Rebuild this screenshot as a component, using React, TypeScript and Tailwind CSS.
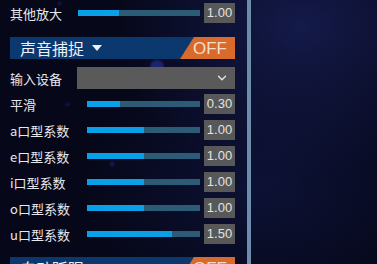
import { ChevronDown } from "lucide-react";

const font = { fontFamily: '"Noto Sans CJK SC", "Noto Sans", sans-serif' };

type SliderRowProps = {
  label: string;
  value: number;
  max?: number;
  labelWidth?: string;
};

const SliderRow = ({ label, value, max = 2, labelWidth = "w-[77px]" }: SliderRowProps) => {
  const pct = Math.min(100, (value / max) * 100);
  return (
    <div className="flex h-[26px] shrink-0 items-center">
      <div className={`${labelWidth} shrink-0 text-[13px] leading-none text-[#e8e8ec]`}>{label}</div>
      <div className="relative h-[6px] flex-1 bg-[#2b5b75]">
        <div className="absolute inset-y-0 left-0 bg-[#09a0e8]" style={{ width: `${pct}%` }} />
      </div>
      <div
        className="ml-[4px] flex h-[20px] w-[31px] items-center justify-center bg-[#585858] text-[13px] text-[#e2e2e2]"
        style={{ fontFamily: '"Liberation Sans", Arial, sans-serif' }}
      >
        {value.toFixed(2)}
      </div>
    </div>
  );
};

const SectionHeader = ({ title }: { title: string }) => (
  <div className="relative flex h-[22px] items-center bg-[#0c3870] pl-[10px]">
    <span className="text-[16px] leading-none text-[#eef0f5]">{title}</span>
    <svg className="ml-[8px]" width="10" height="7" viewBox="0 0 10 7">
      <path d="M0 0 H10 L5 6 Z" fill="#eef0f5" />
    </svg>
    <div className="absolute inset-y-0 right-0 flex w-[55px] items-center justify-end bg-[#d86a2c] pr-[8px] [clip-path:polygon(14px_0,100%_0,100%_100%,0_100%)]">
      <span
        className="text-[17px] leading-none text-[#f6dcc8]"
        style={{ fontFamily: '"Liberation Sans", Arial, sans-serif' }}
      >
        OFF
      </span>
    </div>
  </div>
);

const stars = [
  { x: 58, y: 2, s: 3 },
  { x: 110, y: 101, s: 4 },
  { x: 66, y: 103, s: 3 },
  { x: 110, y: 162, s: 4 },
  { x: 150, y: 60, s: 14 },
  { x: 145, y: 80, s: 6 },
];

export default function App() {
  return (
    <div className="relative flex h-[264px] w-[377px] overflow-hidden bg-[#060718]" style={font}>
      <div className="pointer-events-none absolute inset-0 bg-[radial-gradient(ellipse_at_80%_10%,#141a4a_0%,transparent_45%),radial-gradient(ellipse_at_70%_70%,#0d1236_0%,transparent_50%)]" />
      {stars.map((st, i) => (
        <div
          key={i}
          className="pointer-events-none absolute rounded-full bg-[#2a35a0] opacity-60 blur-[1px]"
          style={{ left: st.x, top: st.y, width: st.s, height: st.s }}
        />
      ))}

      <div className="relative flex w-[247px] shrink-0 flex-col self-start pl-[10px] pr-[12px]">
        <SliderRow label="其他放大" value={1.0} max={3} labelWidth="w-[68px]" />

        <div className="mt-[11px] shrink-0">
          <SectionHeader title="声音捕捉" />
        </div>

        <div className="mt-[8px] flex h-[22px] shrink-0 items-center">
          <div className="w-[67px] shrink-0 text-[13px] leading-none text-[#e8e8ec]">输入设备</div>
          <div className="flex h-full flex-1 items-center justify-end bg-[#5a5a5a] pr-[6px]">
            <ChevronDown className="h-[14px] w-[14px] text-[#e0e0e0]" strokeWidth={2.5} />
          </div>
        </div>

        <div className="mt-[2px] flex shrink-0 flex-col">
          <SliderRow label="平滑" value={0.3} max={1.03} />
          <SliderRow label="a口型系数" value={1.0} />
          <SliderRow label="e口型系数" value={1.0} />
          <SliderRow label="i口型系数" value={1.0} />
          <SliderRow label="o口型系数" value={1.0} />
          <SliderRow label="u口型系数" value={1.5} />
        </div>

        <div className="mt-[10px] shrink-0">
          <SectionHeader title="自动眨眼" />
        </div>
      </div>

      <div className="relative w-[4px] shrink-0 bg-[#6b8dab]" />
      <div className="relative flex-1" />
    </div>
  );
}
